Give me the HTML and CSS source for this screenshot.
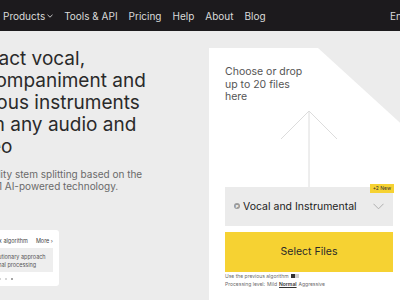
FILE: index.html
```html
<!DOCTYPE html>
<html lang="en">
<head>
    <meta charset="UTF-8">
    <meta name="viewport" content="width=device-width, initial-scale=1.0">
    <title>Stem Splitter</title>
    <link rel="stylesheet" href="styles.css">
</head>
<body>

<header>
    <div class="header-container">
        <nav>
            <ul>
                <li><a href="#">Products
                    <svg class="nav-chevron" width="6" height="4" viewBox="0 0 6 4"><path d="M0.5 0.8 L3 3.2 L5.5 0.8" fill="none" stroke="#d8d8d8" stroke-width="0.9"/></svg>
                </a></li>
                <li><a href="#">Tools &amp; API</a></li>
                <li><a href="#">Pricing</a></li>
                <li><a href="#">Help</a></li>
                <li><a href="#">About</a></li>
                <li><a href="#">Blog</a></li>
            </ul>
        </nav>
        <div class="lang">English</div>
    </div>
</header>

<main class="hero">
    <section class="intro">
        <h1>Extract vocal,<br>accompaniment and<br>various instruments<br>from any audio and<br>video</h1>
        <p class="lead">High-quality stem splitting based on the<br>world's #1 AI-powered technology.</p>

        <div class="algo-card">
            <div class="algo-head">
                <span>Phoenix algorithm</span>
                <a href="#">More &rsaquo;</a>
            </div>
            <div class="algo-body">Revolutionary approach<br>to signal processing</div>
            <div class="dots">
                <span></span><span></span><span></span><span></span><span></span><span class="on"></span>
            </div>
        </div>
    </section>

    <section class="upload-card">
        <p class="drop-text">Choose or drop<br>up to 20 files<br>here</p>
        <svg class="drop-arrow" width="58" height="77" viewBox="0 0 58 77">
            <path d="M1 29 L29 1 L57 29 M29 1 V77" fill="none" stroke="#dcdcdc" stroke-width="1"/>
        </svg>

        <div class="stem-select">
            <span class="p-icon">P</span>
            <span class="stem-name">Vocal and Instrumental</span>
            <svg class="select-chevron" width="11" height="7" viewBox="0 0 11 7"><path d="M0.5 0.8 L5.5 5.8 L10.5 0.8" fill="none" stroke="#a8a8a8" stroke-width="0.9"/></svg>
            <span class="badge">+2 New</span>
        </div>

        <button class="select-btn">Select Files</button>

        <div class="option-row">Use the previous algorithm <span class="toggle"></span></div>
        <div class="option-row">Processing level: <span>Mild</span> <span class="active">Normal</span> <span>Aggressive</span></div>
    </section>
</main>

</body>
</html>
```

FILE: styles.css
```css
html, body {
    overflow: hidden;
}

body {
    font-family: Inter, "Noto Sans", sans-serif;
    margin: 0;
    padding: 0;
    width: 400px;
    height: 300px;
    background-color: #ececec;
}

header {
    background-color: #1c1a1d;
    height: 31px;
}

.header-container {
    display: flex;
    align-items: center;
    height: 100%;
    padding-left: 3px;
}

nav ul {
    display: flex;
    list-style: none;
    padding: 0;
    margin: 0;
    gap: 11px;
}

nav ul li a {
    display: flex;
    align-items: center;
    gap: 2px;
    color: #dadada;
    font-size: 10px;
    text-decoration: none;
}

.nav-chevron {
    margin-top: 1px;
}

.lang {
    margin-left: auto;
    margin-right: -24px;
    color: #dadada;
    font-size: 10px;
}

.hero {
    display: flex;
    padding-top: 17px;
}

.intro {
    flex: 0 0 255px;
    margin-left: -46px;
}

.intro h1 {
    margin: 0;
    padding-left: 9px;
    font-size: 19px;
    line-height: 22px;
    font-weight: 400;
    color: #2a2a2a;
}

.lead {
    margin: 10px 0 0;
    font-size: 10px;
    line-height: 12px;
    color: #6a6a6a;
}

.algo-card {
    width: 84px;
    box-sizing: border-box;
    margin: 38px 0 0 21px;
    padding: 7px 6px 6px;
    background-color: white;
    border-radius: 3px;
    font-size: 5.5px;
    color: #444;
}

.algo-head {
    display: flex;
    justify-content: space-between;
    line-height: 8px;
}

.algo-head a {
    color: #444;
    text-decoration: none;
}

.algo-body {
    margin-top: 3px;
    padding: 6px 3px 3px;
    line-height: 7.5px;
    background-color: #eeeeee;
    color: #555;
}

.dots {
    display: flex;
    gap: 4px;
    margin-top: 6px;
}

.dots span {
    width: 2px;
    height: 2px;
    border-radius: 50%;
    background-color: #c8c8c8;
}

.dots span.on {
    background-color: #888;
}

.upload-card {
    flex: 0 0 200px;
    box-sizing: border-box;
    min-height: 260px;
    padding: 18px 16px 0;
    background-color: white;
    clip-path: polygon(0 0, 109px 0, 100% 83px, 100% 100%, 0 100%);
}

.drop-text {
    margin: 0;
    font-size: 10.5px;
    line-height: 12.5px;
    color: #555;
}

.drop-arrow {
    display: block;
    margin: 6px auto 0;
}

.stem-select {
    position: relative;
    display: flex;
    align-items: center;
    height: 39px;
    padding: 0 9px;
    background-color: #ebebeb;
    font-size: 10.5px;
    color: #222;
}

.p-icon {
    display: flex;
    align-items: center;
    justify-content: center;
    width: 6px;
    height: 6px;
    margin-right: 3px;
    border-radius: 50%;
    background-color: #9a9a9a;
    color: white;
    font-size: 4px;
    font-weight: bold;
}

.select-chevron {
    margin-left: auto;
}

.badge {
    position: absolute;
    top: -3px;
    right: -1px;
    padding: 0 3px;
    background-color: #f6d232;
    font-size: 5px;
    line-height: 9px;
    color: #333;
}

.select-btn {
    display: block;
    width: 100%;
    height: 40px;
    margin-top: 6px;
    border: none;
    background-color: #f6d232;
    font-family: Inter, "Noto Sans", sans-serif;
    font-size: 10.5px;
    color: #2a2a2a;
}

.option-row {
    display: flex;
    align-items: center;
    gap: 2px;
    font-size: 5px;
    line-height: 8px;
    color: #6a6a6a;
}

.option-row:first-of-type {
    margin-top: 6px;
}

.toggle {
    width: 8px;
    height: 4px;
    box-sizing: border-box;
    border-left: 4px solid #333;
    background-color: #cfcfcf;
}

.option-row .active {
    color: #333;
    font-weight: 600;
    text-decoration: underline;
}
```
